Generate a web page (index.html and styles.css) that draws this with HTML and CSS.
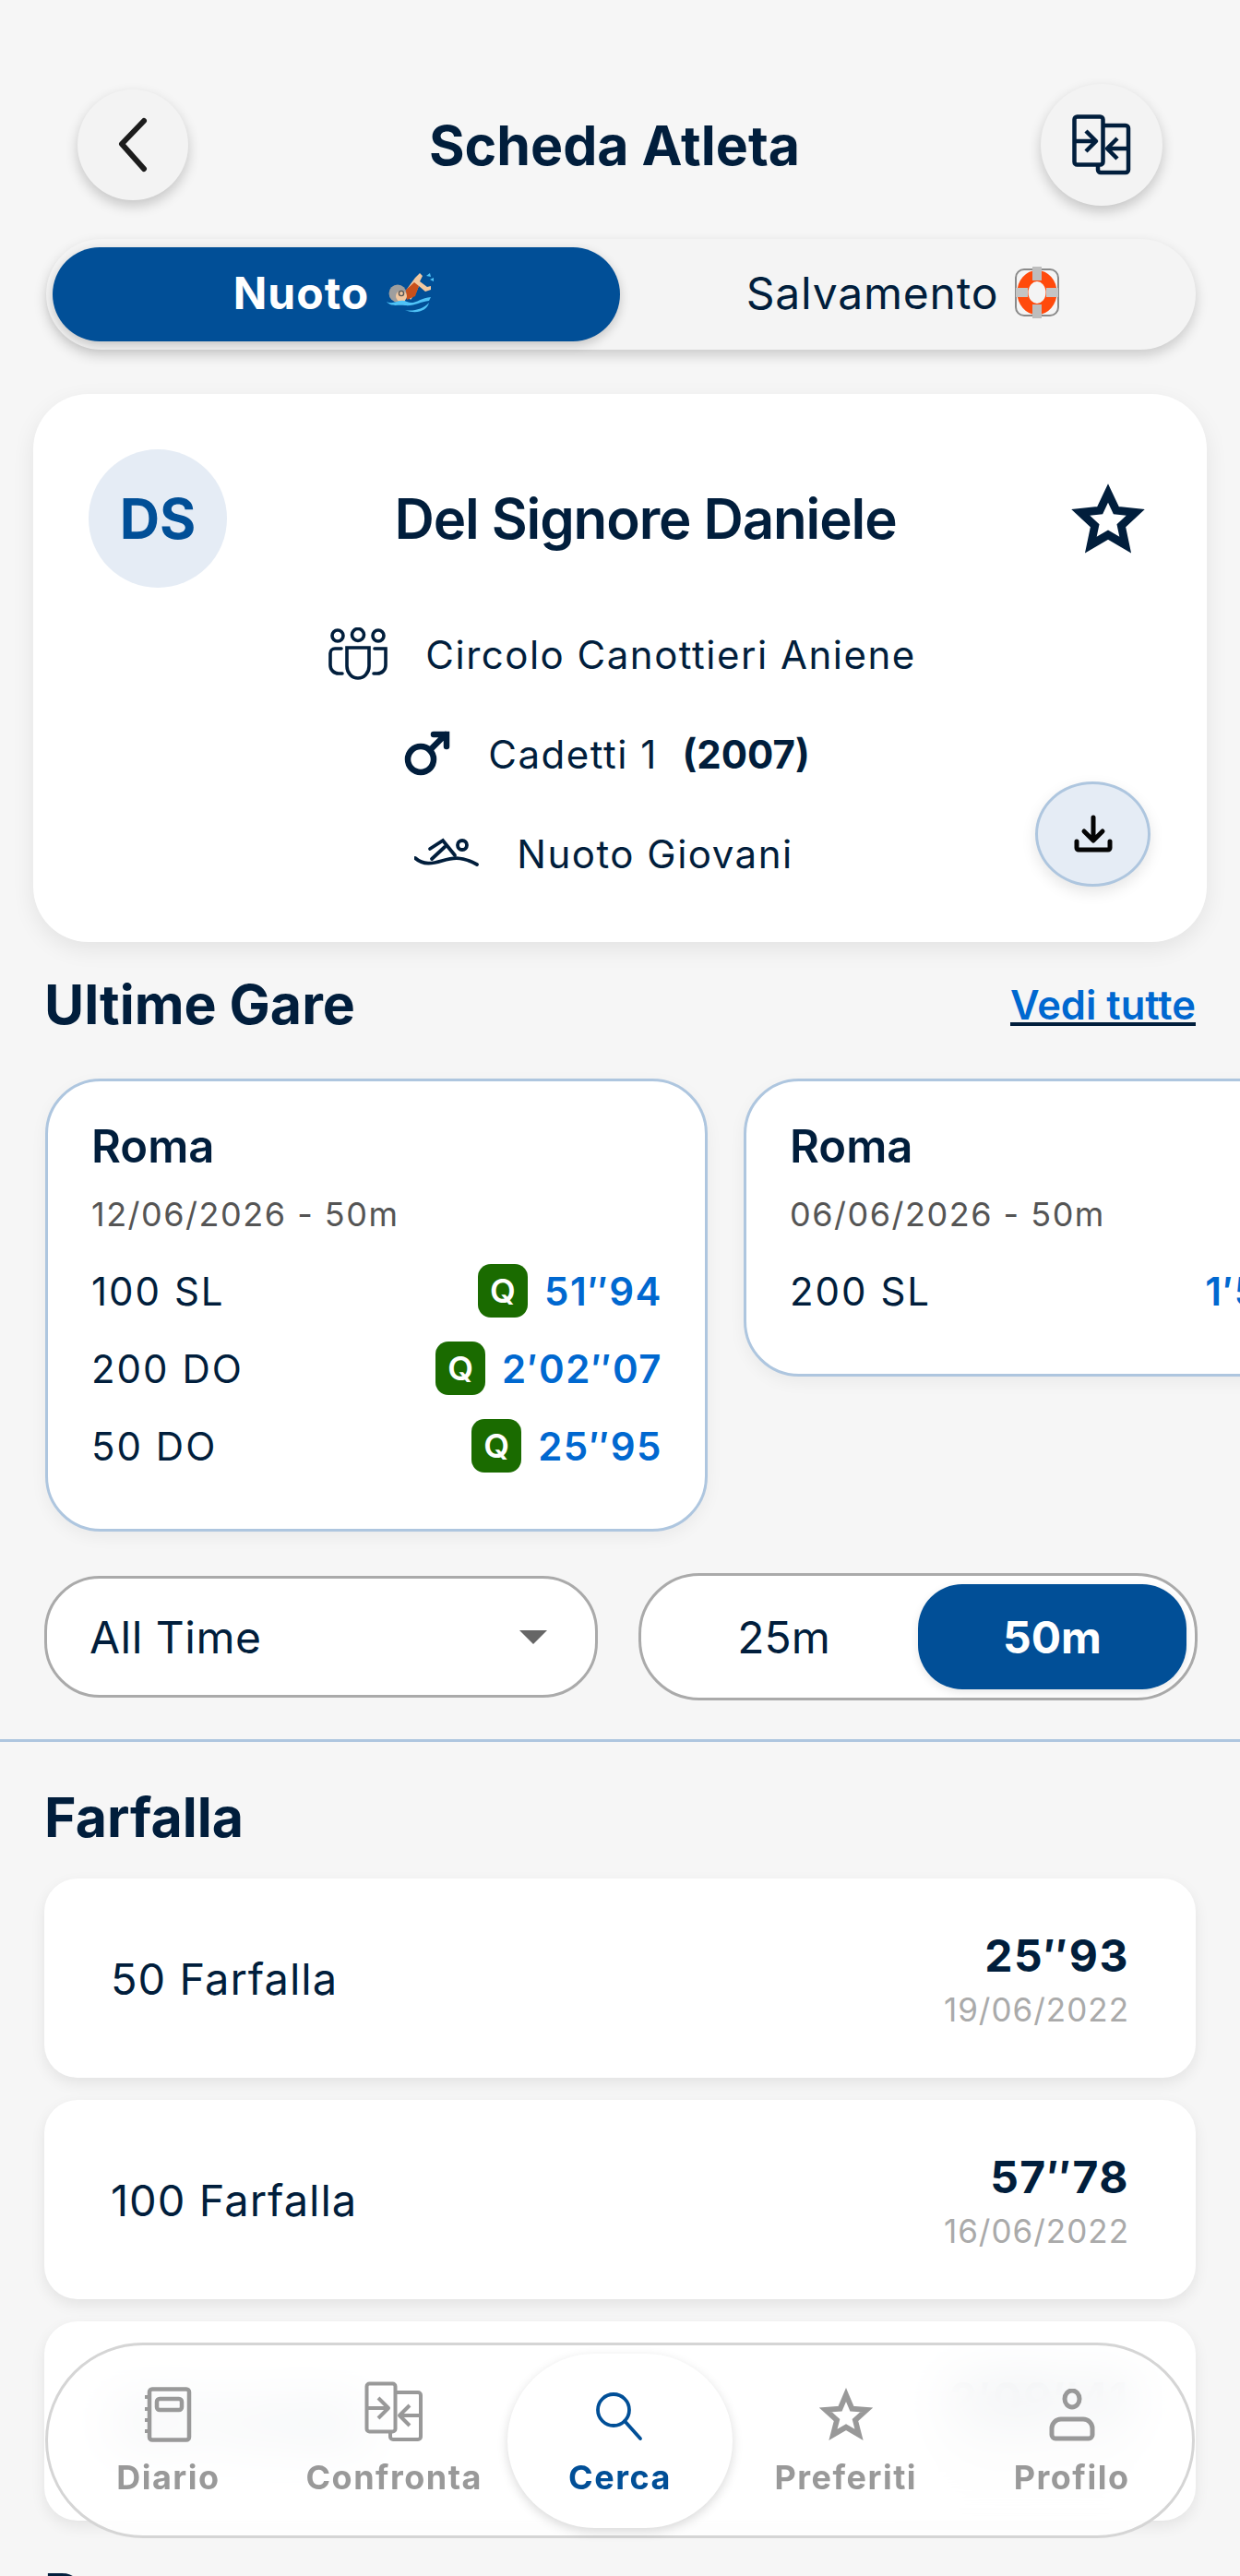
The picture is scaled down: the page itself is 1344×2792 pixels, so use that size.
FILE: index.html
```html
<!DOCTYPE html>
<html lang="it">

<head>
  <meta charset="UTF-8">
  <meta name="viewport" content="width=device-width, initial-scale=1.0">
  <title>Scheda Atleta</title>

  <link rel="stylesheet" href="styles.css">

</head>

<body>
  <div class="app">
    <header class="topbar">
      <button class="round-btn back-btn" type="button">
        <svg width="36" height="60" viewBox="0 0 36 60" fill="none" stroke="#1c1c1c" stroke-width="6" stroke-linecap="round" stroke-linejoin="round"><path d="M30 4 L6 29 L30 56"/></svg>
      </button>
      <h1 class="page-title">Scheda Atleta</h1>
      <button class="round-btn compare-btn" type="button">
        <svg width="64" height="66" viewBox="0 0 64 66" fill="none" stroke="#011e3c" stroke-width="4.5" stroke-linejoin="round"><rect x="2.5" y="2.5" width="31" height="52" rx="3"/><path d="M35 12 H58 a3 3 0 0 1 3 3 V60 a3 3 0 0 1 -3 3 H31 a3 3 0 0 1 -3 -3 V55"/><path d="M3 29 H25 M15 18 L26 29 L15 40 M61 37 H38 M49 26 L38 37 L49 48"/></svg>
      </button>
    </header>

    <div class="sport-toggle">
      <div class="sport-option active">Nuoto
        <svg class="emoji" width="54" height="44" viewBox="0 0 54 44"><path d="M22 21 L33 6 L38 1 L41 4 L38 10 L46 16 L50 15 L50 19 L44 21 L37 15 L34 22 L28 30 Z" fill="#f2c8a0"/><path d="M22 20 L32 11 L37 15 L33 26 L24 30 Z" fill="#c8501c"/><circle cx="14" cy="23" r="9.5" fill="#9e9e9e"/><circle cx="18" cy="26" r="6" fill="#f2c8a0"/><circle cx="18" cy="23" r="2.6" fill="none" stroke="#555" stroke-width="1.4"/><path d="M2 32 C10 36 16 28 24 32 S38 28 50 27 L48 31 C38 32 32 37 22 36 S8 38 2 32 Z" fill="#4fc3f7"/><path d="M22 41 C30 43 42 40 48 33 C46 42 34 46 22 41 Z" fill="#4fc3f7"/><path d="M45 4 L49 1 L50 5 Z M49 8 L53 6 L53 10 Z" fill="#4fc3f7"/></svg>
      </div>
      <div class="sport-option">Salvamento
        <svg class="emoji" width="50" height="56" viewBox="0 0 50 56"><rect x="2" y="3" width="46" height="50" rx="9" fill="none" stroke="#8a8a8a" stroke-width="2"/><ellipse cx="25" cy="28" rx="15.500" ry="18" fill="none" stroke="#ff4a0c" stroke-width="12"/><rect x="20" y="0" width="10" height="15" fill="#bdbdbd"/><rect x="20" y="41" width="10" height="15" fill="#bdbdbd"/><rect x="2" y="23" width="13" height="10" fill="#c4c4c4"/><rect x="35" y="23" width="13" height="10" fill="#c4c4c4"/></svg>
      </div>
    </div>

    <section class="athlete-card">
      <div class="athlete-head">
        <div class="avatar">DS</div>
        <div class="athlete-name">Del Signore Daniele</div>
        <svg class="fav-star" width="88" height="84" viewBox="0 0 80 76" fill="none" stroke="#011e3c" stroke-width="8" stroke-linejoin="miter" stroke-miterlimit="10"><path d="M40 13 L48 30 L67 32 L53 45 L57 64 L40 54 L23 64 L27 45 L13 32 L32 30 Z"/></svg>
      </div>
      <div class="athlete-row row-club">
        <svg width="64" height="58" viewBox="0 0 64 58" fill="none" stroke="#011e3c" stroke-width="3.6" stroke-linecap="round"><circle cx="10" cy="9" r="6"/><circle cx="32" cy="8" r="6.5"/><circle cx="54" cy="9" r="6"/><path d="M20 22 H44 V42 a12 13 0 0 1 -24 0 Z"/><path d="M14 23 H7 a5 5 0 0 0 -5 5 V41 a9 9 0 0 0 9 9 H15"/><path d="M50 23 H62 V41 a9 9 0 0 1 -9 9 H49"/></svg>
        <span>Circolo Canottieri Aniene</span>
      </div>
      <div class="athlete-row row-cat">
        <svg width="50" height="50" viewBox="0 0 50 50" fill="none" stroke="#011e3c" stroke-width="6.5" stroke-linecap="round"><circle cx="18" cy="31" r="14"/><path d="M28 21 L45 4 M32 4 H46 V17"/></svg>
        <span>Cadetti 1 &nbsp;<b>(2007)</b></span>
      </div>
      <div class="athlete-row row-type">
        <svg width="70" height="34" viewBox="0 0 70 34" fill="none" stroke="#011e3c" stroke-width="3.8" stroke-linecap="round"><circle cx="52" cy="8" r="5"/><path d="M17 12 L31 3 L44 19 M19 23 L33 10"/><path d="M1 22 C10 30 20 28 30 25 S50 19 68 29"/></svg>
        <span>Nuoto Giovani</span>
      </div>
      <button class="download-btn" type="button">
        <svg width="42" height="42" viewBox="0 0 42 42" fill="none" stroke="#050505" stroke-width="5" stroke-linecap="round" stroke-linejoin="round"><path d="M21 3 V27 M11 18 L21 28 L31 18"/><path d="M3 29 V36 a2 2 0 0 0 2 2 H37 a2 2 0 0 0 2 -2 V29"/></svg>
      </button>
    </section>

    <div class="section-head">
      <h2 class="section-title">Ultime Gare</h2>
      <a class="see-all">Vedi tutte</a>
    </div>

    <div class="race-list">
      <div class="race-card">
        <div class="race-place">Roma</div>
        <div class="race-date">12/06/2026 - 50m</div>
        <div class="race-row"><span>100 SL</span><span class="race-result"><i class="badge-q">Q</i><em>51″94</em></span></div>
        <div class="race-row"><span>200 DO</span><span class="race-result"><i class="badge-q">Q</i><em>2′02″07</em></span></div>
        <div class="race-row"><span>50 DO</span><span class="race-result"><i class="badge-q">Q</i><em>25″95</em></span></div>
      </div>
      <div class="race-card">
        <div class="race-place">Roma</div>
        <div class="race-date">06/06/2026 - 50m</div>
        <div class="race-row"><span>200 SL</span><span class="race-result"><em>1′52″40</em></span></div>
      </div>
    </div>

    <div class="filters">
      <div class="period-select">All Time <span class="caret"></span></div>
      <div class="pool-switch">
        <div class="pool-option">25m</div>
        <div class="pool-option active">50m</div>
      </div>
    </div>

    <hr class="divider">

    <h2 class="section-title stroke-title">Farfalla</h2>
    <div class="best-list">
      <div class="best-card">
        <div class="best-name">50 Farfalla</div>
        <div class="best-result"><strong>25″93</strong><small>19/06/2022</small></div>
      </div>
      <div class="best-card">
        <div class="best-name">100 Farfalla</div>
        <div class="best-result"><strong>57″78</strong><small>16/06/2022</small></div>
      </div>
      <div class="best-card">
        <div class="best-name">200 Farfalla</div>
        <div class="best-result"><strong>2′09″41</strong><small>18/06/2022</small></div>
      </div>
    </div>

    <h2 class="section-title stroke-title next-title">Dorso</h2>

    <nav class="bottom-nav">
      <a class="nav-item">
        <svg width="52" height="60" viewBox="0 0 52 60" fill="none" stroke="#999" stroke-width="4.5" stroke-linejoin="round"><rect x="6" y="2.5" width="43" height="55" rx="3"/><rect x="14" y="13" width="27" height="12" rx="3"/><path d="M1 11 H7 M1 24 H7 M1 36 H7 M1 48 H7" stroke-width="4"/></svg>
        <span>Diario</span>
      </a>
      <a class="nav-item">
        <svg width="64" height="66" viewBox="0 0 64 66" fill="none" stroke="#999" stroke-width="4" stroke-linejoin="round"><rect x="2.5" y="2.5" width="31" height="52" rx="3"/><path d="M35 12 H58 a3 3 0 0 1 3 3 V60 a3 3 0 0 1 -3 3 H31 a3 3 0 0 1 -3 -3 V55"/><path d="M3 29 H25 M15 18 L26 29 L15 40 M61 37 H38 M49 26 L38 37 L49 48"/></svg>
        <span>Confronta</span>
      </a>
      <a class="nav-item active">
        <svg width="56" height="56" viewBox="0 0 56 56" fill="none" stroke="#014f97" stroke-width="3.8" stroke-linecap="round"><circle cx="21" cy="21" r="17"/><path d="M33 33 L50 52"/></svg>
        <span>Cerca</span>
      </a>
      <a class="nav-item">
        <svg width="68" height="62" viewBox="0 0 58 53" fill="none" stroke="#999" stroke-width="5" stroke-miterlimit="10"><path d="M29 9 L34.500 22 L48 23 L37.500 32.500 L41 46 L29 39 L17 46 L20.500 32.500 L10 23 L23.500 22 Z"/></svg>
        <span>Preferiti</span>
      </a>
      <a class="nav-item">
        <svg width="50" height="58" viewBox="0 0 50 58" fill="none" stroke="#999" stroke-width="5"><ellipse cx="25" cy="11" rx="8" ry="9"/><path d="M13 33 H37 a10 10 0 0 1 10 10 V50 a4 4 0 0 1 -4 4 H7 a4 4 0 0 1 -4 -4 V43 a10 10 0 0 1 10 -10 Z"/></svg>
        <span>Profilo</span>
      </a>
    </nav>
  </div>
</body>

</html>
```

FILE: styles.css
```css
* {
  box-sizing: border-box;
}

body {
  margin: 0;
  padding: 0;
  background-color: #f6f6f6;
  color: #011e3c;
  font-family: Inter, "Noto Sans", sans-serif;
}

.app {
  position: relative;
  width: 1344px;
  height: 2792px;
  overflow: hidden;
}

.topbar {
  display: flex;
  align-items: center;
  height: 132px;
  margin: 91px 84px 0 84px;
}

.round-btn {
  display: flex;
  align-items: center;
  justify-content: center;
  flex: none;
  padding: 0;
  border: none;
  border-radius: 50%;
  background-color: #f3f3f3;
  box-shadow: 0 6px 14px rgba(0, 0, 0, 0.2);
}

.back-btn {
  width: 120px;
  height: 120px;
}

.compare-btn {
  width: 132px;
  height: 132px;
}

.page-title {
  flex: 1;
  margin: 0;
  text-align: center;
  font-size: 59px;
  font-weight: 700;
}

.sport-toggle {
  display: flex;
  height: 120px;
  margin: 36px 48px 0 50px;
  padding: 9px 7px;
  border-radius: 60px;
  background-color: #f4f4f4;
  box-shadow: 0 6px 14px rgba(0, 0, 0, 0.18);
}

.sport-option {
  display: flex;
  align-items: center;
  justify-content: center;
  gap: 17px;
  flex: 1;
  padding: 0 3px 4px 0;
  border-radius: 51px;
  font-size: 48px;
  letter-spacing: 0.8px;
}

.sport-option.active {
  flex: none;
  width: 615px;
  padding-right: 5px;
  background-color: #014f97;
  color: #fff;
  font-weight: 700;
  letter-spacing: 1px;
  box-shadow: 0 4px 12px rgba(0, 0, 0, 0.2);
}

.athlete-card {
  position: relative;
  height: 594px;
  margin: 48px 36px 0 36px;
  padding: 60px 63px 0 60px;
  border-radius: 60px;
  background-color: #fff;
  box-shadow: 0 8px 24px rgba(0, 0, 0, 0.08);
}

.athlete-head {
  display: flex;
  align-items: center;
  margin-bottom: 18px;
}

.avatar {
  display: flex;
  align-items: center;
  justify-content: center;
  width: 150px;
  height: 150px;
  border-radius: 50%;
  background-color: #e5ecf5;
  color: #014f97;
  font-size: 60px;
  font-weight: 700;
}

.athlete-name {
  flex: 1;
  padding-right: 4px;
  text-align: center;
  font-size: 60px;
  font-weight: 600;
  letter-spacing: -1.1px;
}

.athlete-row {
  display: flex;
  align-items: center;
  justify-content: center;
  gap: 41px;
  height: 108px;
  font-size: 42px;
  letter-spacing: 1.5px;
}

.athlete-row b {
  font-weight: 700;
  letter-spacing: 0;
}

.row-club {
  padding-left: 8px;
}

.row-cat {
  padding-right: 25px;
}

.row-type {
  padding-right: 32px;
}

.download-btn {
  position: absolute;
  right: 61px;
  bottom: 60px;
  display: flex;
  align-items: center;
  justify-content: center;
  width: 125px;
  height: 114px;
  padding: 0;
  border: 3px solid #aec6df;
  border-radius: 50%;
  background-color: #e5ecf5;
  box-shadow: 0 6px 16px rgba(0, 0, 0, 0.1);
}

.section-head {
  display: flex;
  align-items: center;
  justify-content: space-between;
  margin: 32px 48px 0 48px;
}

.section-title {
  margin: 0;
  font-size: 59px;
  font-weight: 700;
}

.see-all {
  color: #0068d0;
  font-size: 43.5px;
  font-weight: 600;
  text-decoration: underline;
  text-decoration-color: #011e3c;
}

.race-list {
  display: flex;
  align-items: flex-start;
  gap: 39px;
  margin-top: 45px;
  padding-left: 49px;
}

.race-card {
  flex: none;
  width: 718px;
  padding: 43px 46px 48px 47px;
  border: 3px solid #aec6df;
  border-radius: 60px;
  background-color: #fff;
  box-shadow: 0 6px 18px rgba(0, 0, 0, 0.05);
}

.race-place {
  font-size: 49px;
  font-weight: 600;
  line-height: 56px;
}

.race-date {
  margin: 23px 0 19px 0;
  color: #555;
  font-size: 36px;
  letter-spacing: 1.5px;
  line-height: 44px;
}

.race-row {
  display: flex;
  align-items: center;
  justify-content: space-between;
  height: 84px;
  font-size: 42px;
  letter-spacing: 2px;
}

.race-result {
  display: flex;
  align-items: center;
  gap: 18px;
}

.race-result em {
  color: #0068d0;
  font-style: normal;
  font-weight: 600;
  letter-spacing: 1.5px;
}

.badge-q {
  display: flex;
  align-items: center;
  justify-content: center;
  width: 54px;
  height: 58px;
  border-radius: 14px;
  background-color: #1a6b00;
  color: #fff;
  font-size: 36px;
  font-style: normal;
  font-weight: 600;
  letter-spacing: 0;
}

.filters {
  display: flex;
  align-items: center;
  gap: 44px;
  margin: 45px 46px 0 48px;
}

.period-select {
  display: flex;
  align-items: center;
  justify-content: space-between;
  width: 600px;
  height: 132px;
  padding: 0 52px 0 46px;
  border: 3px solid #aaa;
  border-radius: 60px;
  background-color: #fff;
  font-size: 48px;
  letter-spacing: 0.5px;
}

.caret {
  width: 0;
  height: 0;
  border-top: 15px solid #666;
  border-left: 15px solid transparent;
  border-right: 15px solid transparent;
}

.pool-switch {
  display: flex;
  width: 606px;
  height: 138px;
  padding: 9px;
  border: 3px solid #aaa;
  border-radius: 66px;
  background-color: #fff;
}

.pool-option {
  display: flex;
  align-items: center;
  justify-content: center;
  flex: 1;
  border-radius: 48px;
  font-size: 48px;
}

.pool-option.active {
  flex: none;
  width: 291px;
  background-color: #014f97;
  color: #fff;
  font-weight: 700;
  box-shadow: 0 3px 10px rgba(0, 0, 0, 0.1);
}

.divider {
  height: 3px;
  margin: 42px 0 0 0;
  border: none;
  background-color: #aec6df;
}

.stroke-title {
  margin: 46px 48px 0 48px;
}

.next-title {
  margin-top: 43px;
}

.best-list {
  display: flex;
  flex-direction: column;
  gap: 24px;
  margin: 31px 48px 0 48px;
}

.best-card {
  display: flex;
  align-items: center;
  justify-content: space-between;
  height: 216px;
  padding: 0 72px 0 72px;
  border-radius: 36px;
  background-color: #fff;
  box-shadow: 0 6px 16px rgba(0, 0, 0, 0.08);
}

.best-name {
  font-size: 47px;
  letter-spacing: 1px;
}

.best-result {
  display: flex;
  flex-direction: column;
  align-items: flex-end;
  gap: 8px;
}

.best-result strong {
  font-size: 48px;
  font-weight: 700;
  letter-spacing: 1.5px;
}

.best-result small {
  color: #aaa;
  font-size: 35px;
  letter-spacing: 1px;
}

/* floating bar, sits over the list */
.bottom-nav {
  position: absolute;
  left: 49px;
  top: 2539px;
  display: grid;
  grid-template-columns: repeat(5, 1fr);
  align-items: center;
  width: 1246px;
  height: 212px;
  padding: 0 8px;
  border: 3px solid #d5d5d5;
  border-radius: 106px;
  background-color: rgba(255, 255, 255, 0.82);
  backdrop-filter: blur(30px);
}

.nav-item {
  display: flex;
  flex-direction: column;
  align-items: center;
  justify-content: flex-end;
  height: 189px;
  padding-bottom: 33px;
  gap: 16px;
  border-radius: 95px;
  color: #999;
  font-size: 36px;
  font-weight: 700;
  letter-spacing: 1.5px;
}

.nav-item.active {
  background-color: #fff;
  color: #014f97;
  box-shadow: 0 4px 12px rgba(0, 0, 0, 0.15);
}
```
